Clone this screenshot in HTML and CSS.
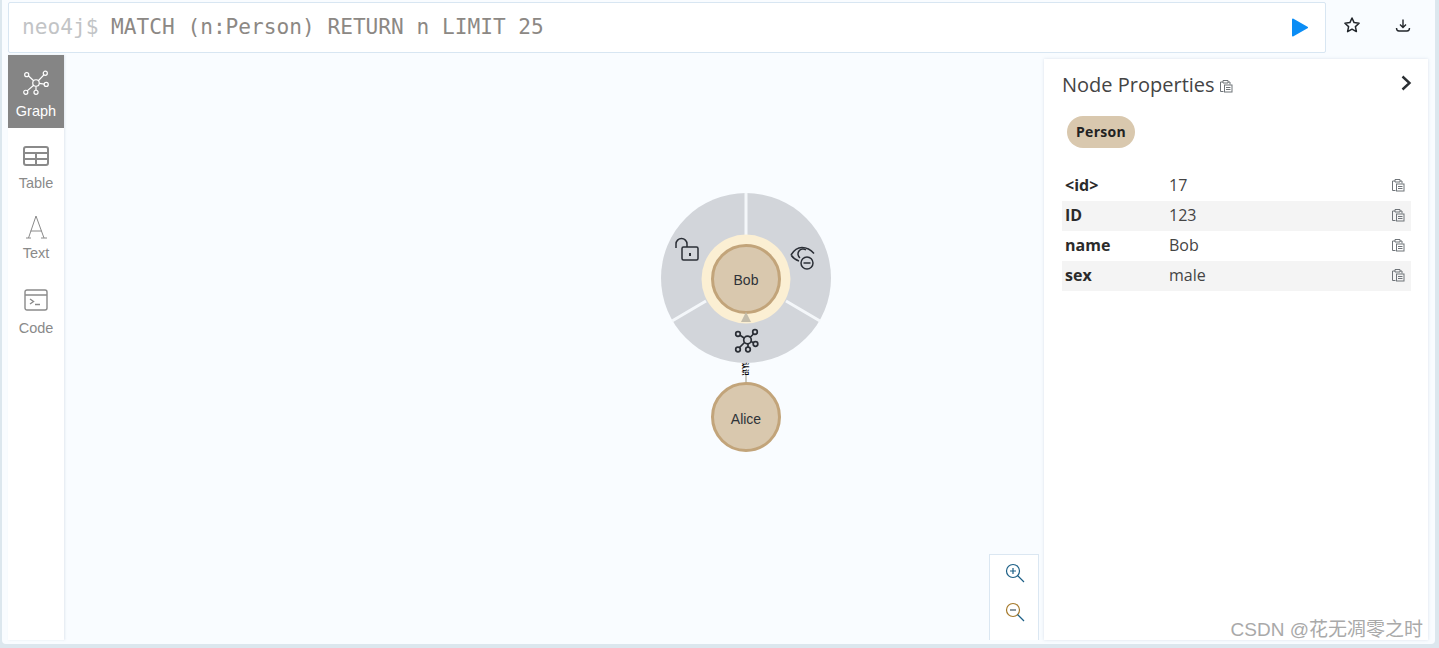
FILE: index.html
```html
<!DOCTYPE html>
<html lang="en">
<head>
    <meta charset="UTF-8">
    <title>Neo4j Browser</title>
    <link rel="stylesheet" href="styles.css">
</head>
<body>
    <svg class="defs" width="0" height="0">
        <symbol id="clip" viewBox="0 0 14 14">
            <path d="M4.5 12.5H1.5V3H4M9 3H11V5.5M4 3V1.5H9V4H4V3Z" fill="none" stroke="currentColor" stroke-width="1"/>
            <rect x="5.5" y="6" width="7.5" height="7" fill="none" stroke="currentColor" stroke-width="1"/>
            <path d="M7 8.5H11.5M7 10.5H11.5" stroke="currentColor" stroke-width="1"/>
        </symbol>
    </svg>
    <div class="frame">
        <div class="topbar">
            <div class="editor">
                <span class="prompt">neo4j$</span>
                <span class="query">MATCH (n:Person) RETURN n LIMIT 25</span>
                <svg class="run" width="17" height="19" viewBox="0 0 17 19"><path d="M2 1.5 L16 9.5 L2 17.5 Z" fill="#0b8df5" stroke="#0b8df5" stroke-width="2" stroke-linejoin="round"/></svg>
            </div>
            <div class="actions">
                <svg width="18" height="18" viewBox="0 0 18 18"><path d="M9 2l2.1 4.6 5 .6-3.7 3.4 1 5L9 13.2 4.600 15.600l1-5L1.900 7.200l5-.6z" fill="none" stroke="#22262b" stroke-width="1.500" stroke-linejoin="round"/></svg>
                <svg width="18" height="18" viewBox="0 0 18 18"><path d="M9 3.500v7.500M6 8.500L9 11.500 12 8.500M2.500 12c0 1.800 1 3 2.500 3h8c1.500 0 2.500-1.200 2.500-3" fill="none" stroke="#22262b" stroke-width="1.400"/></svg>
            </div>
        </div>
        <div class="main">
            <nav class="sidebar">
                <div class="tab tab-active">
                    <svg width="26" height="26" viewBox="0 0 28 28" fill="none" stroke="currentColor" stroke-width="1.300">
                        <circle cx="14" cy="14" r="3.500"/><circle cx="4" cy="5" r="2.200"/><circle cx="24" cy="3.500" r="2.200"/><circle cx="25" cy="15.500" r="2.200"/><circle cx="3" cy="24" r="2.200"/><circle cx="14" cy="24" r="2.200"/>
                        <path d="M6 6.500l5.500 5M22.500 5.300l-6 6.300M17.500 14.500l5.300.7M11.500 16.500l-7 6M14 17.500v4.300"/>
                    </svg>
                    <span>Graph</span>
                </div>
                <div class="tab">
                    <svg width="26" height="20" viewBox="0 0 26 20" fill="none" stroke="currentColor" stroke-width="2"><rect x="1" y="1" width="24" height="18" rx="2"/><path d="M1 7h24M1 13h24M13 7v12"/></svg>
                    <span>Table</span>
                </div>
                <div class="tab tab-text">
                    <svg width="22" height="24" viewBox="0 0 22 24" fill="none" stroke="currentColor" stroke-width="1"><path d="M11 1L3.500 23M11 1l8 22M5.500 16h11M1 23h5M16 23h6"/></svg>
                    <span>Text</span>
                </div>
                <div class="tab">
                    <svg width="24" height="22" viewBox="0 0 24 22" fill="none" stroke="currentColor" stroke-width="1.400"><rect x="1" y="1" width="22" height="20" rx="2"/><path d="M1 6h22M6 10l3.500 2.500L6 15M11 15.500h5"/></svg>
                    <span>Code</span>
                </div>
            </nav>
            <div class="canvas">
                <svg class="graph" width="980" height="585" viewBox="64 55 980 585">
                    <line x1="746" y1="374" x2="746" y2="383" stroke="#c9c9c2" stroke-width="2"/>
                    <circle cx="746" cy="278" r="85" fill="#d2d5da"/>
                    <path d="M746 193V238M672 321L706 301M820 321L786 301" stroke="#f4f7fa" stroke-width="3"/>
                    <circle cx="746" cy="279" r="44.500" fill="#fbefd3"/>
                    <circle cx="746" cy="279" r="33.500" fill="#d9c8ae" stroke="#c2a47a" stroke-width="3"/>
                    <circle cx="746" cy="417" r="33.500" fill="#d9c8ae" stroke="#c2a47a" stroke-width="3"/>
                    <path d="M746 312L751 322H741Z" fill="#c4bdab"/>
                    <text class="node-label" x="746" y="285">Bob</text>
                    <text class="node-label" x="746" y="424">Alice</text>
                    <text class="rel-label" transform="translate(742.500 362.500) rotate(90)">认识</text>
                    <g fill="none" stroke="#2b2f36" stroke-width="1.500">
                        <rect x="682" y="247" width="16" height="13" rx="1.500"/>
                        <path d="M676 248v-4a5.500 5.500 0 0 1 11 0v3"/>
                        <path d="M690 253v3" stroke-width="2"/>
                        <path d="M791 255c3-5 7-7.500 11-7.500 5 0 9 2.500 12 6M791 255c2 3 5 5 8 6"/>
                        <path d="M800 258a5 5 0 0 1 6-8"/>
                        <circle cx="807" cy="263" r="6"/>
                        <path d="M803.500 263h7"/>
                    </g>
                    <g fill="none" stroke="#2b2f36" stroke-width="1.700">
                        <circle cx="747.500" cy="340" r="3.800"/>
                        <circle cx="738" cy="334" r="2.300"/><circle cx="755" cy="332" r="2.300"/><circle cx="755.500" cy="344" r="2.300"/><circle cx="738" cy="349.500" r="2.300"/><circle cx="748" cy="349.500" r="2.300"/>
                        <path d="M740 335.300l4.500 3M753.500 334l-3.500 3.500M751 341.500l2.500 1.300M744.500 342.500l-5 5M748 344v3"/>
                    </g>
                </svg>
                <div class="zoom-box">
                    <svg width="20" height="20" viewBox="0 0 20 20" fill="none" stroke="#1c5f86" stroke-width="1.200"><circle cx="8" cy="8" r="6.500"/><path d="M12.500 12.500L19 19M5 8h6M8 5v6"/></svg>
                    <svg width="20" height="20" viewBox="0 0 20 20" fill="none" stroke="#3f5560" stroke-width="1.200"><circle cx="8" cy="8" r="6.500" stroke="#a5792a"/><path d="M12.500 12.500L19 19" stroke="#1c5f86"/><path d="M5 8h6"/></svg>
                </div>
            </div>
            <aside class="panel">
                <div class="panel-head">
                    <span class="panel-title">Node Properties</span>
                    <svg class="clip clip-title"><use href="#clip"/></svg>
                    <svg class="chevron" width="12" height="16" viewBox="0 0 12 16"><path d="M2.500 1.500L9.500 8L2.500 14.500" fill="none" stroke="#2b2f33" stroke-width="2.400"/></svg>
                </div>
                <div class="labels"><span class="pill">Person</span></div>
                <div class="props">
                    <div class="prop"><b>&lt;id&gt;</b><span>17</span><svg class="clip"><use href="#clip"/></svg></div>
                    <div class="prop prop-alt"><b>ID</b><span>123</span><svg class="clip"><use href="#clip"/></svg></div>
                    <div class="prop"><b>name</b><span>Bob</span><svg class="clip"><use href="#clip"/></svg></div>
                    <div class="prop prop-alt"><b>sex</b><span>male</span><svg class="clip"><use href="#clip"/></svg></div>
                </div>
            </aside>
        </div>
    </div>
    <div class="watermark">CSDN @花无凋零之时</div>
</body>
</html>
```
FILE: styles.css
```css
html, body {
    margin: 0;
    height: 648px;
    overflow: hidden;
}
body {
    background-color: #dce7ee;
    font-family: "Liberation Sans", Arial, sans-serif;
    color: #333;
}
.defs {
    display: block;
    height: 0;
}
.frame {
    margin-left: 2px;
    width: 1433px;
    height: 644px;
    background-color: #f9fcff;
    border-radius: 0 0 4px 4px;
    box-sizing: border-box;
    padding: 2px 7px 4px 6px;
    display: flex;
    flex-direction: column;
}
.topbar {
    display: flex;
    height: 51px;
    flex: none;
}
.editor {
    flex: none;
    width: 1318px;
    box-sizing: border-box;
    background-color: #fff;
    border: 1px solid #d8e6f2;
    border-radius: 2px;
    display: flex;
    align-items: center;
    padding: 0 17px 2px 13px;
    font-family: "DejaVu Sans Mono", monospace;
    font-size: 21.15px;
}
.prompt {
    color: #c2c4c6;
    margin-right: 12.700px;
}
.query {
    color: #8c8884;
    flex: 1;
}
.run {
    margin-top: 2px;
}
.actions {
    flex: 1;
    display: flex;
    justify-content: space-between;
    padding: 0 16px 6px 17px;
    align-items: center;
}
.main {
    flex: 1;
    display: flex;
    min-height: 0;
    margin-top: 2px;
}
.sidebar {
    width: 56px;
    flex: none;
    background-color: #fff;
    box-shadow: 1px 0 2px rgba(180, 195, 210, 0.35);
}
.tab {
    height: 72px;
    box-sizing: border-box;
    display: flex;
    flex-direction: column;
    align-items: center;
    padding-top: 18px;
    gap: 9px;
    color: #8a8a8a;
    font-size: 14.500px;
}
.tab-active {
    height: 73px;
    padding-top: 15px;
    gap: 7px;
    background-color: #858585;
    color: #fff;
}
.tab-text {
    height: 71px;
    padding-top: 15px;
    gap: 6px;
}
.canvas {
    flex: 1;
    position: relative;
    min-width: 0;
}
.graph {
    position: absolute;
    left: 0;
    top: 0;
}
.node-label {
    font-size: 14px;
    text-anchor: middle;
    fill: #2f3338;
}
.rel-label {
    font-family: "Noto Sans CJK SC", sans-serif;
    font-size: 6.500px;
    font-weight: 700;
    fill: #000;
}
.zoom-box {
    position: absolute;
    right: 5px;
    bottom: 0;
    width: 48px;
    height: 77px;
    background-color: #fff;
    border: 1px solid #dbe7f2;
    border-bottom: none;
    display: flex;
    flex-direction: column;
    align-items: center;
    padding-top: 8px;
    gap: 19px;
}
.zoom-box svg {
    margin-left: 2px;
}
.panel {
    flex: none;
    width: 384px;
    margin-top: 4px;
    background-color: #fff;
    box-shadow: 0 0 3px rgba(180, 195, 210, 0.45);
    font-family: "Open Sans", sans-serif;
    box-sizing: border-box;
    padding: 0 17px 0 18px;
}
.panel-head {
    display: flex;
    align-items: center;
    height: 50px;
    color: #444;
}
.panel-title {
    font-size: 20px;
}
.clip {
    width: 14px;
    height: 14px;
    color: #6f7479;
    flex: none;
}
.clip-title {
    margin: 3px 0 0 4px;
}
.chevron {
    margin: -2px -1px 0 auto;
}
.labels {
    padding: 7px 0 0 5px;
    height: 62px;
    box-sizing: border-box;
}
.pill {
    display: inline-block;
    background-color: #d9c8ae;
    color: #222;
    font-size: 14px;
    font-weight: 700;
    letter-spacing: 0.3px;
    line-height: 32px;
    padding: 0 9px;
    border-radius: 16px;
}
.prop {
    display: flex;
    align-items: center;
    height: 30px;
    box-sizing: border-box;
    font-size: 16px;
    padding: 0 6px 2px 3px;
}
.prop-alt {
    background-color: #f4f4f4;
}
.prop b {
    width: 104px;
    flex: none;
    color: #2b2b2b;
}
.prop span {
    flex: 1;
    color: #444;
}
.watermark {
    position: absolute;
    right: 16px;
    top: 614px;
    font-family: "Liberation Sans", "Noto Sans CJK SC", sans-serif;
    font-size: 19px;
    color: #a9a9a9;
    white-space: nowrap;
}
```
